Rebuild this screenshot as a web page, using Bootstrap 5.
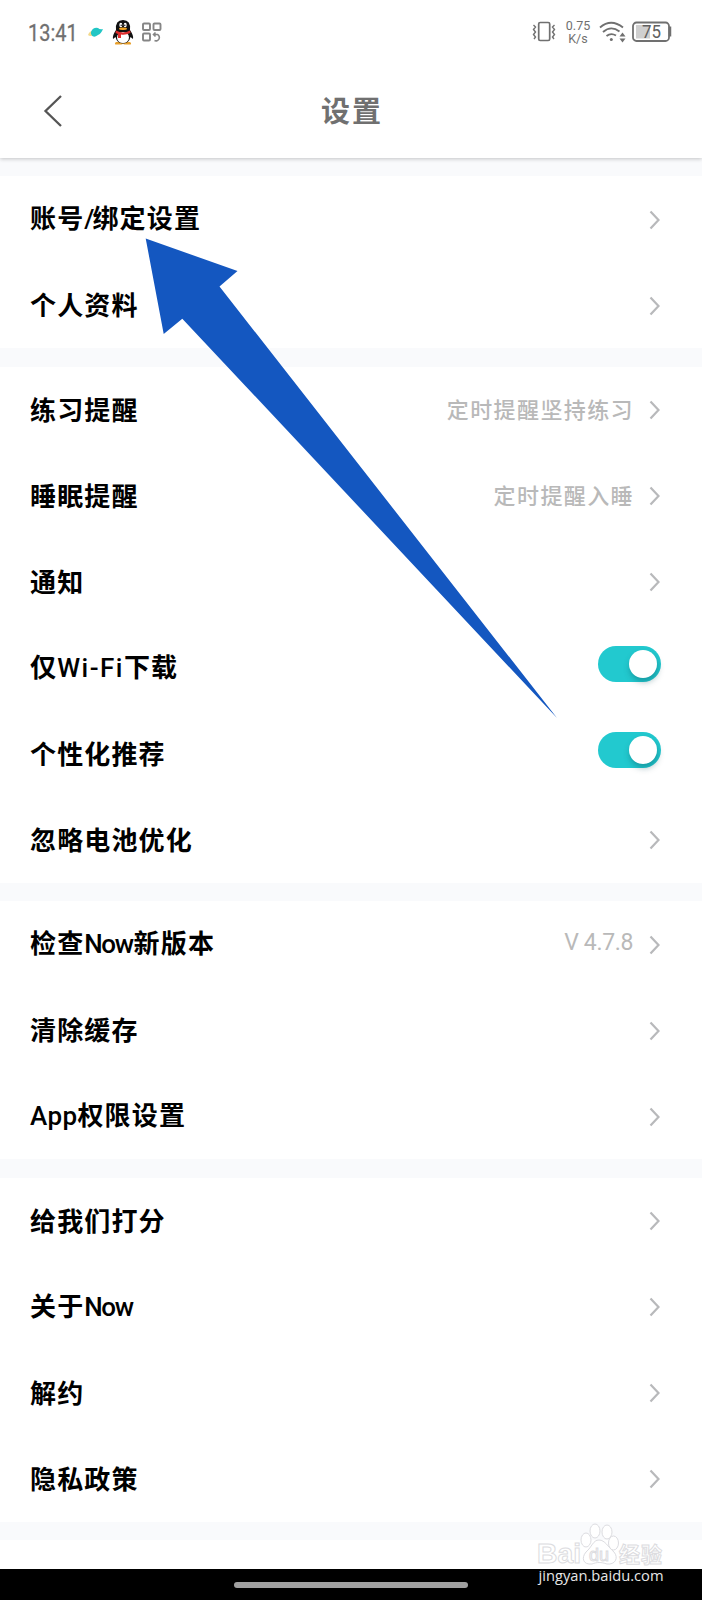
<!DOCTYPE html>
<html lang="zh-CN">
<head>
<meta charset="utf-8">
<meta name="viewport" content="width=device-width, initial-scale=1">
<title>设置</title>
<link href="https://cdn.jsdelivr.net/npm/bootstrap@5.3.0/dist/css/bootstrap.min.css" rel="stylesheet">
<style>
  body { font-family: "Noto Sans CJK SC", sans-serif; background: #f9fafc; color: #000; }
  .screen { width: 702px; height: 1600px; overflow: hidden; }
  .status { height: 64px; padding: 0 30px 0 28px; color: #707070; font-family: Roboto, sans-serif; }
  .clock { font-size: 24px; line-height: 1; width: 51px; white-space: nowrap; transform: scaleX(.83); transform-origin: left center; -webkit-text-stroke: .3px; padding-top: 2px; }
  .speed { font-size: 12.5px; line-height: 13.5px; width: 26px; margin-left: 9px; }
  .topbar { height: 94px; padding: 0 43px; }
  .topbar h1 { font-size: 29px; font-weight: 700; letter-spacing: 2px; color: #707070; margin-right: 18px; padding-bottom: 3px; }
  .head { height: 158px; box-shadow: 0 1px 4px rgba(0,0,0,.22); z-index: 1; }
  .gap-band { height: 18.4px; }
  .item { height: 86px; padding: 0 42px 0 30px; }
  .label { font-size: 26px; font-weight: 700; letter-spacing: 1.15px; line-height: 40px; white-space: nowrap; padding-bottom: 2px; }
  .latin { font-family: Roboto, sans-serif; font-weight: 500; }
  .w-slash { letter-spacing: -2px; }
  .w-now { letter-spacing: -1.4px; margin-right: 1px; }
  .w-wifi { letter-spacing: 1.5px; }
  .w-app { letter-spacing: .4px; }
  .hint { font-size: 22px; font-weight: 500; letter-spacing: 1.4px; color: #b9b9b9; margin-right: 15px; line-height: 30px; padding-bottom: 4px; }
  .version { font-family: Roboto, sans-serif; font-size: 23px; font-weight: 400; letter-spacing: -.35px; margin-right: 16px; padding-bottom: 2px; }
  .chev { width: 11px; height: 20px; margin-top: 1px; }
  .toggle { width: 63px; height: 36px; border-radius: 18px; background: #22c9cf; padding: 4px; margin: 0 -1px 8px 0; }
  .knob { width: 28px; height: 28px; border-radius: 50%; background: #fff; box-shadow: 1px 4px 6px rgba(0,70,80,.35); }
  .tail { height: 29px; }
  .navbar-sys { height: 32px; background: #000; }
  .home { width: 234px; height: 6px; border-radius: 3px; background: #a0a0a0; }
  .pointer { left: 0; top: 0; z-index: 3; }
  .wm { left: 537px; top: 1522px; z-index: 4; }
</style>
</head>
<body>
<svg class="d-none"><symbol id="chev" viewBox="0 0 11 20"><path d="M1.500 1.500L9.500 10L1.500 18.500" fill="none" stroke="#b8b9bb" stroke-width="2.200"/></symbol></svg>
<div class="screen position-relative d-flex flex-column">
  <header class="head bg-white position-relative flex-shrink-0">
    <div class="status d-flex align-items-center">
      <span class="clock">13:41</span>
      <svg class="ms-2" width="17" height="14" viewBox="0 0 17 14"><path d="M1 10Q3 5 8 6L7 10Q3 12 1 10Z" fill="#f3d98b"/><path d="M4 7Q6 2 11 3Q13 5 16 4Q14 9 11 10Q6 14 4 9Z" fill="#22c6c5"/></svg>
      <svg class="ms-2" width="22" height="26" viewBox="0 0 22 26"><path d="M4 23Q1 26 6 25.500Q11 26 11 24Q11 26 16 25.500Q21 26 18 23Z" fill="#e8a02c"/><path d="M4 11Q3 1 11 1Q19 1 18 11Q22 17 21 20L18.500 18Q17 24.500 11 24.500Q5 24.500 3.500 18L1 20Q0 17 4 11Z" fill="#111"/><ellipse cx="11" cy="18.500" rx="6" ry="5.500" fill="#fff"/><ellipse cx="8.800" cy="6" rx="1.500" ry="2.200" fill="#fff"/><ellipse cx="13.200" cy="6" rx="1.500" ry="2.200" fill="#fff"/><circle cx="9.200" cy="6.300" r=".7"/><circle cx="12.800" cy="6.300" r=".7"/><ellipse cx="11" cy="9.700" rx="4" ry="1.200" fill="#f5a623"/><path d="M4 11.500Q11 15.500 18 11.500L18.500 14Q13 16.500 9 15.500V19H6V15L3.500 14Z" fill="#df2c2c"/></svg>
      <svg class="ms-2" width="20" height="20" viewBox="0 0 20 20" fill="none" stroke="#858585" stroke-width="1.900"><rect x="1" y="1.500" width="7" height="6.500" rx="1"/><rect x="11.500" y="1.500" width="7" height="6.500" rx="1"/><rect x="1" y="11.500" width="7" height="7" rx="1"/><path d="M12 12.500H15.500A3 3 0 1 1 12.500 18.500M13.500 10.500L11.500 12.500L13.500 14.500" stroke-width="1.600"/></svg>
      <div class="ms-auto d-flex align-items-center">
        <svg width="24" height="22" viewBox="0 0 24 22" fill="none" stroke="#707070"><rect x="6.700" y="1.500" width="11" height="18" rx="1.500" stroke-width="1.700"/><path d="M1.500 4L3.500 6L1.500 8.500L3.500 11L1.500 13.500L3.500 16L2 18M22.500 4L20.500 6L22.500 8.500L20.500 11L22.500 13.500L20.500 16L22 18" stroke-width="1.400"/></svg>
        <div class="speed text-center">0.75<br>K/s</div>
        <svg class="ms-2" width="27" height="22" viewBox="0 0 27 22" fill="none" stroke="#707070" stroke-width="1.900"><path d="M1 6.500Q12 -3 24 6.500M4 11Q12 4 20.500 10.500M7.500 15Q12 11.500 17 14.500"/><circle cx="12.300" cy="18.500" r="1.500" fill="#707070" stroke="none"/><path d="M20.500 15.500L23.500 11.500L26.500 15.500ZM20.500 17.500L23.500 21.500L26.500 17.500Z" fill="#707070" stroke="none"/></svg>
        <svg style="margin-left:6px" width="40" height="22" viewBox="0 0 40 22"><rect x="1" y="1.500" width="36" height="18.500" rx="3.500" fill="none" stroke="#707070" stroke-width="1.800"/><path d="M4 4H18V17.500H4Z" fill="#cfcfcf"/><path d="M38 5.500V15.500" stroke="#707070" stroke-width="2.500"/><text x="10" y="17.200" font-size="18" font-family="Roboto" fill="#606060" textLength="19" lengthAdjust="spacingAndGlyphs">75</text></svg>
      </div>
    </div>
    <div class="topbar d-flex align-items-center">
      <svg width="20" height="34" viewBox="0 0 20 34"><path d="M18 2L2.500 17L18 32" fill="none" stroke="#555" stroke-width="2.300"/></svg>
      <h1 class="flex-grow-1 text-center mb-0">设置</h1>
    </div>
  </header>
  <main class="flex-shrink-0">
    <div class="gap-band"></div>
    <section class="bg-white">
      <div class="item d-flex align-items-center"><span class="label me-auto">账号<span class="latin w-slash">/</span>绑定设置</span><svg class="chev"><use href="#chev"/></svg></div>
      <div class="item d-flex align-items-center"><span class="label me-auto">个人资料</span><svg class="chev"><use href="#chev"/></svg></div>
    </section>
    <div class="gap-band"></div>
    <section class="bg-white">
      <div class="item d-flex align-items-center"><span class="label me-auto">练习提醒</span><span class="hint">定时提醒坚持练习</span><svg class="chev"><use href="#chev"/></svg></div>
      <div class="item d-flex align-items-center"><span class="label me-auto">睡眠提醒</span><span class="hint">定时提醒入睡</span><svg class="chev"><use href="#chev"/></svg></div>
      <div class="item d-flex align-items-center"><span class="label me-auto">通知</span><svg class="chev"><use href="#chev"/></svg></div>
      <div class="item d-flex align-items-center"><span class="label me-auto">仅<span class="latin w-wifi">Wi-Fi</span>下载</span><div class="toggle d-flex justify-content-end"><div class="knob"></div></div></div>
      <div class="item d-flex align-items-center"><span class="label me-auto">个性化推荐</span><div class="toggle d-flex justify-content-end"><div class="knob"></div></div></div>
      <div class="item d-flex align-items-center"><span class="label me-auto">忽略电池优化</span><svg class="chev"><use href="#chev"/></svg></div>
    </section>
    <div class="gap-band"></div>
    <section class="bg-white">
      <div class="item d-flex align-items-center"><span class="label me-auto">检查<span class="latin w-now">Now</span>新版本</span><span class="hint version">V 4.7.8</span><svg class="chev"><use href="#chev"/></svg></div>
      <div class="item d-flex align-items-center"><span class="label me-auto">清除缓存</span><svg class="chev"><use href="#chev"/></svg></div>
      <div class="item d-flex align-items-center"><span class="label me-auto"><span class="latin w-app">App</span>权限设置</span><svg class="chev"><use href="#chev"/></svg></div>
    </section>
    <div class="gap-band"></div>
    <section class="bg-white">
      <div class="item d-flex align-items-center"><span class="label me-auto">给我们打分</span><svg class="chev"><use href="#chev"/></svg></div>
      <div class="item d-flex align-items-center"><span class="label me-auto">关于<span class="latin w-now">Now</span></span><svg class="chev"><use href="#chev"/></svg></div>
      <div class="item d-flex align-items-center"><span class="label me-auto">解约</span><svg class="chev"><use href="#chev"/></svg></div>
      <div class="item d-flex align-items-center"><span class="label me-auto">隐私政策</span><svg class="chev"><use href="#chev"/></svg></div>
    </section>
    <div class="gap-band"></div>
    <div class="tail bg-white"></div>
  </main>
  <footer class="navbar-sys d-flex justify-content-center align-items-center flex-shrink-0"><div class="home"></div></footer>

  <!-- pointer arrow over the list -->
  <svg class="pointer position-absolute" width="702" height="760" viewBox="0 0 702 760"><path d="M145.700 238.500L237.500 271L219.500 286.500L557 718L182.300 318.700L163.700 334Z" fill="#1457c0"/></svg>

  <!-- site watermark -->
  <svg class="wm position-absolute" width="130" height="66" viewBox="0 0 130 66">
    <g fill="#fff" stroke="#dcdce0" stroke-width="1">
      <text x="0" y="41" font-family="Liberation Sans" font-weight="700" font-size="28" textLength="44" lengthAdjust="spacingAndGlyphs">Bai</text>
      <ellipse cx="49" cy="18" rx="5" ry="7"/><ellipse cx="58" cy="9" rx="5" ry="7"/><ellipse cx="70" cy="10" rx="5" ry="7"/><ellipse cx="76.500" cy="21" rx="5" ry="7"/>
      <path d="M62 18C68 18 71 25 77 30C82 36 78 43 70 42C64 40 60 40 55 42C46 43 44 36 49 30C55 25 56 18 62 18Z"/>
      <text x="52" y="38.500" font-family="Liberation Sans" font-size="18" textLength="20">du</text>
      <text x="82" y="40" font-family="Noto Sans CJK SC" font-weight="700" font-size="21" textLength="43">经验</text>
    </g>
    <text x="1.500" y="59" font-family="Open Sans" font-size="15" fill="#e6e6e6" textLength="125" lengthAdjust="spacingAndGlyphs">jingyan.baidu.com</text>
  </svg>
</div>
<script src="https://cdn.jsdelivr.net/npm/bootstrap@5.3.0/dist/js/bootstrap.bundle.min.js"></script>
</body>
</html>
